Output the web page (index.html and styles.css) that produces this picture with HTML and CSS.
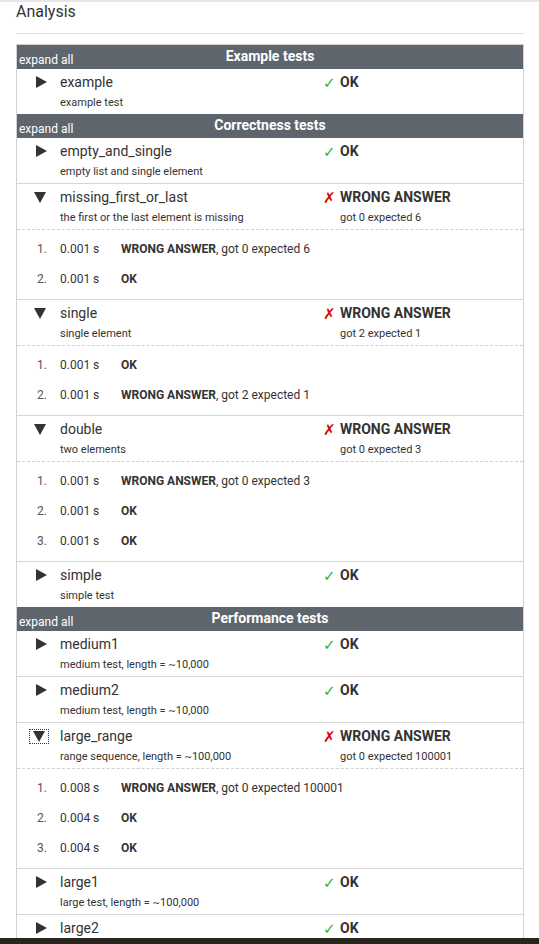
FILE: index.html
```html
<!DOCTYPE html>
<html>
<head>
<meta charset="utf-8">
<link rel="stylesheet" href="styles.css">
</head>
<body>
<div class="page">
  <h2 class="title">Analysis</h2>
  <div class="rule"></div>
  <div class="tbl">
    <div class="grp-head"><span class="expand">expand all</span><span class="grp-title">Example tests</span><span></span></div>
    <div class="test">
      <div class="row">
        <span class="tog"><svg class="tri-r" viewBox="0 0 11 12"><path d="M0 0L11 6L0 12Z"/></svg></span>
        <span class="name">example</span>
        <span class="ico ok">✓</span>
        <span class="res">OK</span>
        <span></span><span class="desc">example test</span><span></span><span></span>
      </div>
    </div>

    <div class="grp-head"><span class="expand">expand all</span><span class="grp-title">Correctness tests</span><span></span></div>
    <div class="test">
      <div class="row">
        <span class="tog"><svg class="tri-r" viewBox="0 0 11 12"><path d="M0 0L11 6L0 12Z"/></svg></span>
        <span class="name">empty_and_single</span>
        <span class="ico ok">✓</span>
        <span class="res">OK</span>
        <span></span><span class="desc">empty list and single element</span><span></span><span></span>
      </div>
    </div>
    <div class="test">
      <div class="row open">
        <span class="tog"><svg class="tri-d" viewBox="0 0 12 11"><path d="M0 0L12 0L6 11Z"/></svg></span>
        <span class="name">missing_first_or_last</span>
        <span class="ico bad">✗</span>
        <span class="res">WRONG ANSWER</span>
        <span></span><span class="desc">the first or the last element is missing</span><span></span><span class="desc">got 0 expected 6</span>
      </div>
      <ol class="subs">
        <li><span class="num">1.</span><span class="time">0.001 s</span><span class="msg"><b>WRONG ANSWER</b>, got 0 expected 6</span></li>
        <li><span class="num">2.</span><span class="time">0.001 s</span><span class="msg"><b>OK</b></span></li>
      </ol>
    </div>
    <div class="test">
      <div class="row open">
        <span class="tog"><svg class="tri-d" viewBox="0 0 12 11"><path d="M0 0L12 0L6 11Z"/></svg></span>
        <span class="name">single</span>
        <span class="ico bad">✗</span>
        <span class="res">WRONG ANSWER</span>
        <span></span><span class="desc">single element</span><span></span><span class="desc">got 2 expected 1</span>
      </div>
      <ol class="subs">
        <li><span class="num">1.</span><span class="time">0.001 s</span><span class="msg"><b>OK</b></span></li>
        <li><span class="num">2.</span><span class="time">0.001 s</span><span class="msg"><b>WRONG ANSWER</b>, got 2 expected 1</span></li>
      </ol>
    </div>
    <div class="test">
      <div class="row open">
        <span class="tog"><svg class="tri-d" viewBox="0 0 12 11"><path d="M0 0L12 0L6 11Z"/></svg></span>
        <span class="name">double</span>
        <span class="ico bad">✗</span>
        <span class="res">WRONG ANSWER</span>
        <span></span><span class="desc">two elements</span><span></span><span class="desc">got 0 expected 3</span>
      </div>
      <ol class="subs">
        <li><span class="num">1.</span><span class="time">0.001 s</span><span class="msg"><b>WRONG ANSWER</b>, got 0 expected 3</span></li>
        <li><span class="num">2.</span><span class="time">0.001 s</span><span class="msg"><b>OK</b></span></li>
        <li><span class="num">3.</span><span class="time">0.001 s</span><span class="msg"><b>OK</b></span></li>
      </ol>
    </div>
    <div class="test">
      <div class="row">
        <span class="tog"><svg class="tri-r" viewBox="0 0 11 12"><path d="M0 0L11 6L0 12Z"/></svg></span>
        <span class="name">simple</span>
        <span class="ico ok">✓</span>
        <span class="res">OK</span>
        <span></span><span class="desc">simple test</span><span></span><span></span>
      </div>
    </div>

    <div class="grp-head"><span class="expand">expand all</span><span class="grp-title">Performance tests</span><span></span></div>
    <div class="test">
      <div class="row">
        <span class="tog"><svg class="tri-r" viewBox="0 0 11 12"><path d="M0 0L11 6L0 12Z"/></svg></span>
        <span class="name">medium1</span>
        <span class="ico ok">✓</span>
        <span class="res">OK</span>
        <span></span><span class="desc">medium test, length = ~10,000</span><span></span><span></span>
      </div>
    </div>
    <div class="test">
      <div class="row">
        <span class="tog"><svg class="tri-r" viewBox="0 0 11 12"><path d="M0 0L11 6L0 12Z"/></svg></span>
        <span class="name">medium2</span>
        <span class="ico ok">✓</span>
        <span class="res">OK</span>
        <span></span><span class="desc">medium test, length = ~10,000</span><span></span><span></span>
      </div>
    </div>
    <div class="test">
      <div class="row open">
        <span class="tog"><span class="focus"><svg class="tri-d" viewBox="0 0 12 11"><path d="M0 0L12 0L6 11Z"/></svg></span></span>
        <span class="name">large_range</span>
        <span class="ico bad">✗</span>
        <span class="res">WRONG ANSWER</span>
        <span></span><span class="desc">range sequence, length = ~100,000</span><span></span><span class="desc">got 0 expected 100001</span>
      </div>
      <ol class="subs">
        <li><span class="num">1.</span><span class="time">0.008 s</span><span class="msg"><b>WRONG ANSWER</b>, got 0 expected 100001</span></li>
        <li><span class="num">2.</span><span class="time">0.004 s</span><span class="msg"><b>OK</b></span></li>
        <li><span class="num">3.</span><span class="time">0.004 s</span><span class="msg"><b>OK</b></span></li>
      </ol>
    </div>
    <div class="test">
      <div class="row">
        <span class="tog"><svg class="tri-r" viewBox="0 0 11 12"><path d="M0 0L11 6L0 12Z"/></svg></span>
        <span class="name">large1</span>
        <span class="ico ok">✓</span>
        <span class="res">OK</span>
        <span></span><span class="desc">large test, length = ~100,000</span><span></span><span></span>
      </div>
    </div>
    <div class="test">
      <div class="row">
        <span class="tog"><svg class="tri-r" viewBox="0 0 11 12"><path d="M0 0L11 6L0 12Z"/></svg></span>
        <span class="name">large2</span>
        <span class="ico ok">✓</span>
        <span class="res">OK</span>
        <span></span><span class="desc">large test, length = ~100,000</span><span></span><span></span>
      </div>
    </div>
  </div>
</div>
<div class="taskbar"></div>
</body>
</html>
```
FILE: styles.css
```css
html, body {
  margin: 0;
  padding: 0;
  background: #fff;
}
body {
  font-family: Roboto, "Liberation Sans", sans-serif;
  color: #333;
  border-top: 2px solid #e6e6e6;
  height: 942px;
  overflow: hidden;
}
.page {
  padding: 0 15px 0 16px;
}
.title {
  margin: 0;
  font-size: 16px;
  font-weight: 400;
  line-height: 20px;
  color: #333;
}
.rule {
  margin-top: 11px;
  border-top: 1px solid #e0e0e0;
}
.tbl {
  margin-top: 10px;
  border: 1px solid #d0d0d0;
  border-bottom: none;
}
.grp-head {
  display: grid;
  grid-template-columns: 1fr auto 1fr;
  height: 24px;
  background: #5e656d;
  color: #fff;
}
.expand {
  align-self: end;
  padding-left: 2px;
  font-size: 12px;
  line-height: 18px;
}
.grp-title {
  font-size: 14px;
  font-weight: 700;
  line-height: 22px;
}
.test + .test {
  border-top: 1px solid #d6d6d6;
}
.row {
  display: grid;
  grid-template-columns: 43px 263px 17px 1fr;
  grid-template-rows: 20px 21px;
  padding: 3px 0 1px;
}
.row.open {
  border-bottom: 1px dashed #d0d0d0;
}
.tog {
  display: flex;
  align-items: center;
  height: 20px;
}
.tri-r {
  width: 11px;
  height: 12px;
  margin-left: 19px;
  fill: #333;
}
.tri-d {
  width: 12px;
  height: 11px;
  fill: #333;
  display: block;
}
.row .tog > .tri-d {
  margin-left: 17px;
}
.focus {
  margin-left: 13px;
  padding: 1px 3px;
  outline: 1px dotted #333;
  outline-offset: 0;
}
.name {
  font-size: 14px;
  line-height: 20px;
}
.ico {
  font-family: "DejaVu Sans", sans-serif;
  font-size: 15px;
  line-height: 20px;
  transform: translateY(1px);
}
.ico.ok { color: #1fba1f; }
.ico.bad { color: #e00000; }
.res {
  font-size: 14px;
  font-weight: 700;
  line-height: 20px;
}
.desc {
  font-size: 11px;
  line-height: 20px;
  align-self: end;
}
.subs {
  list-style: none;
  margin: 0;
  padding: 4px 0 5px;
}
.subs li {
  display: grid;
  grid-template-columns: 43px 61px 1fr;
  height: 30px;
  align-items: center;
  font-size: 12px;
}
.num {
  text-align: right;
  padding-right: 13px;
  color: #555;
}
.msg b {
  font-weight: 700;
}
.taskbar {
  position: fixed;
  left: 0;
  right: 0;
  bottom: 0;
  height: 6px;
  background: #26261f;
}
```
